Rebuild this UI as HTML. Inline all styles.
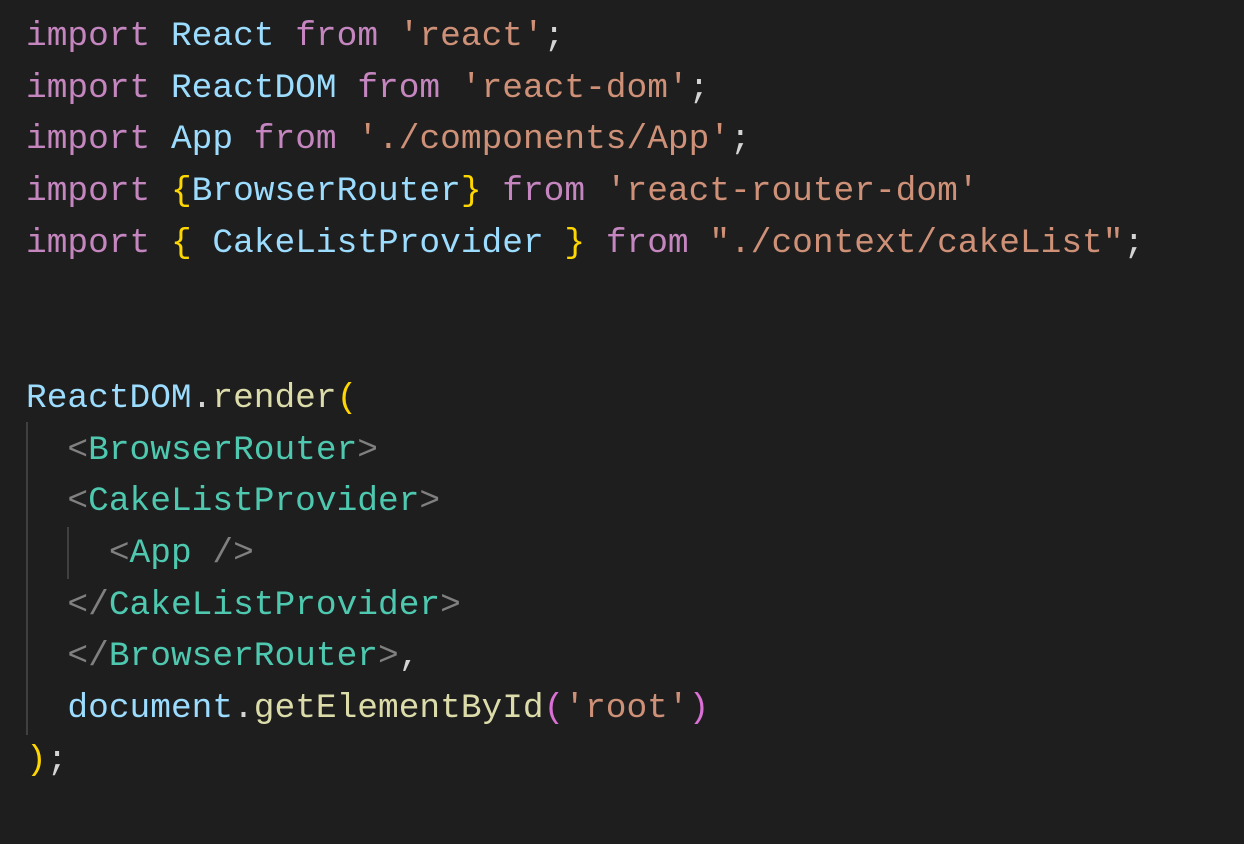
<!DOCTYPE html>
<html><head><meta charset="utf-8">
<style>
html,body{margin:0;padding:0;background:#1e1e1e;width:1244px;height:844px;overflow:hidden;}
pre{margin:0;position:absolute;left:26px;top:11px;font-family:"Liberation Mono",monospace;font-size:34.5px;line-height:51.7px;color:#d4d4d4;white-space:pre;}
.k{color:#c586c0}.i{color:#9cdcfe}.s{color:#ce9178}.b{color:#ffd700}.t{color:#4ec9b0}.p{color:#808080}.f{color:#dcdcaa}.m{color:#da70d6}
.g{position:absolute;width:2px;background:#404040;}
</style></head><body>
<div class="g" style="left:26px;top:422px;height:313px"></div>
<div class="g" style="left:67px;top:527px;height:52px"></div>
<pre><span class="k">import</span> <span class="i">React</span> <span class="k">from</span> <span class="s">'react'</span>;
<span class="k">import</span> <span class="i">ReactDOM</span> <span class="k">from</span> <span class="s">'react-dom'</span>;
<span class="k">import</span> <span class="i">App</span> <span class="k">from</span> <span class="s">'./components/App'</span>;
<span class="k">import</span> <span class="b">{</span><span class="i">BrowserRouter</span><span class="b">}</span> <span class="k">from</span> <span class="s">'react-router-dom'</span>
<span class="k">import</span> <span class="b">{</span> <span class="i">CakeListProvider</span> <span class="b">}</span> <span class="k">from</span> <span class="s">"./context/cakeList"</span>;


<span class="i">ReactDOM</span>.<span class="f">render</span><span class="b">(</span>
  <span class="p">&lt;</span><span class="t">BrowserRouter</span><span class="p">&gt;</span>
  <span class="p">&lt;</span><span class="t">CakeListProvider</span><span class="p">&gt;</span>
    <span class="p">&lt;</span><span class="t">App</span> <span class="p">/&gt;</span>
  <span class="p">&lt;/</span><span class="t">CakeListProvider</span><span class="p">&gt;</span>
  <span class="p">&lt;/</span><span class="t">BrowserRouter</span><span class="p">&gt;</span>,
  <span class="i">document</span>.<span class="f">getElementById</span><span class="m">(</span><span class="s">'root'</span><span class="m">)</span>
<span class="b">)</span>;</pre>
</body></html>
